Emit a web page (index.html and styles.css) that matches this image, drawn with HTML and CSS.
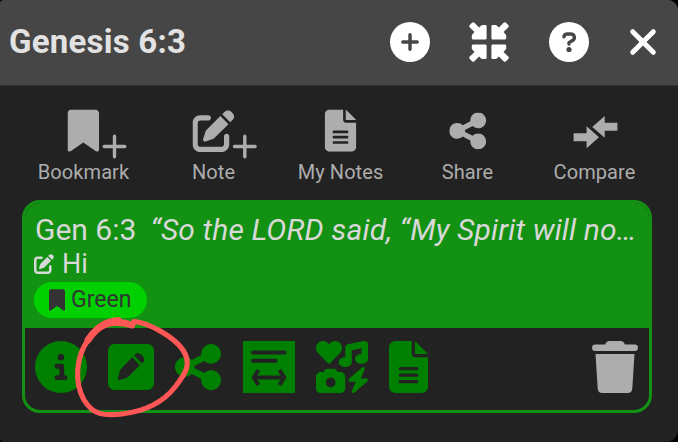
FILE: index.html
```html
<!DOCTYPE html>
<html lang="en">
<head>
<meta charset="utf-8">
<title>Genesis 6:3</title>
<link rel="stylesheet" href="styles.css">
</head>
<body>
<svg class="defs" aria-hidden="true">
  <symbol id="bookmark" viewBox="0 0 384 512"><path d="M0 48V487.7C0 501.1 10.9 512 24.3 512c5 0 9.9-1.5 14-4.4L192 400 345.7 507.6c4.1 2.9 9 4.4 14 4.4c13.4 0 24.3-10.9 24.3-24.3V48c0-26.5-21.5-48-48-48H48C21.5 0 0 21.5 0 48z"/></symbol>
  <symbol id="edit" viewBox="0 0 512 512"><path d="M471.6 21.7c-21.9-21.9-57.3-21.9-79.2 0L362.3 51.7l97.9 97.9 30.1-30.1c21.9-21.9 21.9-57.3 0-79.2L471.6 21.7zm-299.2 220c-6.1 6.1-10.8 13.6-13.5 21.9l-29.6 88.8c-2.9 8.6-.6 18.1 5.8 24.6s15.9 8.7 24.6 5.8l88.8-29.6c8.2-2.7 15.7-7.4 21.9-13.5L437.7 172.3 339.7 74.3 172.4 241.7zM96 64C43 64 0 107 0 160V416c0 53 43 96 96 96H352c53 0 96-43 96-96V320c0-17.7-14.3-32-32-32s-32 14.3-32 32v96c0 17.7-14.3 32-32 32H96c-17.7 0-32-14.3-32-32V160c0-17.7 14.3-32 32-32h96c17.7 0 32-14.3 32-32s-14.3-32-32-32H96z"/></symbol>
  <symbol id="file" viewBox="0 0 384 512"><path d="M64 0C28.7 0 0 28.7 0 64V448c0 35.3 28.7 64 64 64H320c35.3 0 64-28.7 64-64V160H256c-17.7 0-32-14.3-32-32V0H64zM256 0V128H384L256 0zM112 256H272c8.8 0 16 7.2 16 16s-7.2 16-16 16H112c-8.8 0-16-7.2-16-16s7.2-16 16-16zm0 64H272c8.8 0 16 7.2 16 16s-7.2 16-16 16H112c-8.8 0-16-7.2-16-16s7.2-16 16-16zm0 64H272c8.8 0 16 7.2 16 16s-7.2 16-16 16H112c-8.8 0-16-7.2-16-16s7.2-16 16-16z"/></symbol>
  <symbol id="share" viewBox="0 32 448 448"><path d="M352 224c53 0 96-43 96-96s-43-96-96-96s-96 43-96 96c0 4 .2 8 .7 11.9l-94.1 47C145.4 170.2 121.9 160 96 160c-53 0-96 43-96 96s43 96 96 96c25.9 0 49.4-10.2 66.6-26.9l94.1 47c-.5 3.9-.7 7.8-.7 11.9c0 53 43 96 96 96s96-43 96-96s-43-96-96-96c-25.9 0-49.4 10.2-66.6 26.9l-94.1-47c.5-3.9 .7-7.8 .7-11.9s-.2-8-.7-11.9l94.1-47C302.6 213.8 326.1 224 352 224z"/></symbol>
  <symbol id="media" viewBox="0 0 512 512"><path d="M500.3 7.3C507.7 13.3 512 22.4 512 32V176c0 26.5-28.7 48-64 48s-64-21.5-64-48s28.7-48 64-48V71L352 90.2V208c0 26.5-28.7 48-64 48s-64-21.5-64-48s28.7-48 64-48V64c0-15.3 10.8-28.4 25.7-31.4l160-32c9.4-1.9 19.1 .6 26.6 6.600zM74.7 304l11.8-17.8c5.9-8.9 15.9-14.2 26.6-14.2h61.7c10.7 0 20.7 5.3 26.6 14.2L213.300 304H240c26.5 0 48 21.5 48 48V464c0 26.5-21.5 48-48 48H48c-26.5 0-48-21.5-48-48V352c0-26.5 21.5-48 48-48H74.7zM192 408a48 48 0 1 0 -96 0 48 48 0 1 0 96 0zM478.7 278.3L440.3 368H496c6.7 0 12.6 4.1 15 10.4s.6 13.3-4.4 17.7l-128 112c-5.6 4.9-13.9 5.3-19.9 .9s-8.2-12.4-5.3-19.2L391.7 400H336c-6.7 0-12.6-4.1-15-10.4s-.6-13.3 4.4-17.7l128-112c5.6-4.9 13.9-5.3 19.9-.9s8.2 12.4 5.3 19.2zm-339-59.2c-6.5 6.5-17 6.5-23 0L19.9 119.2c-28-29-26.5-76.9 5-103.9c27-23.5 68.4-19 93.4 6.5l10 10.5 9.500-10.5c25-25.5 65.9-30 93.9-6.500c31 27 32.5 74.9 4.5 103.9l-96.4 99.900z"/></symbol>
  <symbol id="arrow-in" viewBox="0 0 18 18"><path d="M.8 5.400Q-.4 4.200.8 3L3 .8Q4.200-.4 5.400.8L10.100 5.500 12.200 3.500Q13.200 2.700 14.500 3H16.400Q17.600 3 17.600 4.200V16.300Q17.600 17.600 16.300 17.600H4.200Q2.800 17.600 2.800 16.300V14.500Q2.600 13.300 3.500 12.300L5.500 10.100Z"/></symbol>
</svg>

<main class="modal">
  <header class="header">
    <h1 class="title">Genesis 6:3</h1>
    <div class="header-actions">
      <svg width="40" height="40" viewBox="0 0 40 40"><circle cx="20" cy="20" r="20"/><path class="hdr-cut" d="M20 12.8V27.2M12.8 20H27.2"/></svg>
      <svg width="40" height="40" viewBox="0 0 40 40"><use href="#arrow-in" width="18" height="18"/><use href="#arrow-in" width="18" height="18" transform="translate(40 0) scale(-1 1)"/><use href="#arrow-in" width="18" height="18" transform="translate(0 40) scale(1 -1)"/><use href="#arrow-in" width="18" height="18" transform="translate(40 40) scale(-1 -1)"/></svg>
      <svg width="40" height="40" viewBox="0 0 40 40"><circle cx="20" cy="20" r="20"/><path class="hdr-cut" d="M14.900 14.800Q15.500 12 18.400 12H21.400C26 12 26.500 16.800 23.500 18.500L20 20.600V22"/><circle class="hdr-dot" cx="20" cy="27.5" r="2.6"/></svg>
      <svg class="close" width="26" height="26" viewBox="0 0 26 26"><path d="M2.700 2.700 23.300 23.300M23.300 2.700 2.700 23.300"/></svg>
    </div>
  </header>

  <nav class="toolbar">
    <div class="tool"><svg width="80" height="54"><use href="#bookmark" x="23.5" y="4.5" width="31.6" height="42.2"/><path class="plus" d="M70.500 31.200V51.800M60.200 41.500H80.800"/></svg><span>Bookmark</span></div>
    <div class="tool"><svg width="80" height="54"><use href="#edit" x="18.500" y="5" width="42" height="42"/><path class="plus" d="M70.800 31.200V51.800M60.500 41.500H81.100"/></svg><span>Note</span></div>
    <div class="tool"><svg width="80" height="54"><use href="#file" x="23.700" y="4.500" width="31.600" height="42.200"/></svg><span>My Notes</span></div>
    <div class="tool"><svg width="80" height="54"><use href="#share" x="21.300" y="7.500" width="36.800" height="36.800"/></svg><span>Share</span></div>
    <div class="tool"><svg width="80" height="54"><path d="M18.600 28.300H31.600V21.300L44 32.300L31.600 43.300V36.300H18.600ZM62.400 17.800H49.700V11L37.300 22L49.700 32.800V25.800H62.400Z"/></svg><span>Compare</span></div>
  </nav>

  <section class="card">
    <div class="card-top">
      <div class="verse"><span class="ref">Gen 6:3</span><em class="quote">“So the LORD said, “My Spirit will no…</em></div>
      <div class="note"><svg width="20" height="20"><use href="#edit" width="20" height="20"/></svg><span>Hi</span></div>
      <div class="label"><svg width="16" height="22"><use href="#bookmark" width="16" height="22"/></svg><span>Green</span></div>
    </div>
    <div class="card-actions">
      <svg width="52" height="52" viewBox="0 0 512 512"><circle cx="256" cy="256" r="256"/><path class="cut" d="M216 336h24V272H216c-13.300 0-24-10.700-24-24s10.700-24 24-24h48c13.300 0 24 10.700 24 24v88h8c13.300 0 24 10.700 24 24s-10.700 24-24 24H216c-13.300 0-24-10.700-24-24s10.700-24 24-24zm40-208a32 32 0 1 1 0 64 32 32 0 1 1 0-64z"/></svg>
      <svg width="46" height="46" viewBox="0 0 46 46"><rect width="46" height="46" rx="6.500"/><path class="cut" d="M26.200 11.400 28.700 9Q31.500 8.600 34.300 11.500T36.400 17.300L34 19.600ZM24.300 13.300 31.800 21.200 20.500 32.600 Q19.500 33.600 17.500 34.200L11.300 36Q9.500 36.300 10 34.400L11.600 28Q12 25.700 13.300 24.400Z"/></svg>
      <svg width="46" height="46"><use href="#share" width="46" height="46"/></svg>
      <svg width="52" height="52" viewBox="0 0 52 52"><path d="M0 0H52V52H0Z"/><path class="lines" d="M10 11.500H41.500M10 19.800H32.500"/><path class="span" d="M11 36.500H41M15.500 29 10.800 36.500 15.500 44M36.500 29 41.200 36.500 36.500 44"/></svg>
      <svg width="52" height="52"><use href="#media" width="52" height="52"/></svg>
      <svg width="39" height="52"><use href="#file" width="39" height="52"/></svg>
      <svg class="trash" width="46" height="52" viewBox="0 0 46 52"><path d="M3.300 3.500H13.200Q14 0 17.500 0H28.500Q32 0 32.800 3.500H42.700A3.250 3.250 0 0 1 42.700 10H3.300A3.250 3.250 0 0 1 3.300 3.500ZM3.500 13H42.500L40.300 47.500Q39.900 52 35.500 52H10.500Q6.100 52 5.700 47.500Z"/></svg>
    </div>
  </section>

  <svg class="annotation" width="130" height="110" viewBox="70 312 130 110"><path d="M134 321.500C150 323 174 337 183 350C192 364 186 373 175 387C161 405 139 412 122 414C104 416 93 415 84 400C74 382 76 357 88 340C97 326 106 320 119 319.500"/><path class="thick" d="M88 340C98 325 110 318 132 325"/></svg>
</main>
</body>
</html>
```

FILE: styles.css
```css
* { box-sizing: border-box; }

body {
  margin: 0;
  background: #000;
  font-family: Roboto, "Liberation Sans", sans-serif;
}

svg { display: block; flex: none; fill: currentColor; overflow: visible; }
.defs { position: absolute; width: 0; height: 0; }

.modal {
  position: relative;
  width: 678px;
  height: 442px;
  overflow: hidden;
  background: #222;
  border-radius: 4px 10px 12px 4px;
}

.header {
  display: flex;
  align-items: center;
  justify-content: space-between;
  height: 86px;
  padding: 0 22px 2px 9px;
  background: #464646;
  border-bottom: 1px solid #333;
}
.title { margin: 0; font-size: 33px; line-height: 40px; font-weight: 700; letter-spacing: 0.22px; color: #e2e2e2; }
.header-actions { display: flex; align-items: center; gap: 39.5px; color: #fff; }
.hdr-cut { fill: none; stroke: #464646; stroke-width: 3.4; stroke-linecap: round; stroke-linejoin: round; }
.hdr-dot { fill: #464646; }
.close { margin-left: 2px; }
.close path { fill: none; stroke: currentColor; stroke-width: 5; stroke-linecap: round; }

.toolbar {
  display: grid;
  grid-template-columns: 129px 131px 123px 131px 123px;
  height: 114px;
  padding: 19px 0 0 19px;
  color: #adadad;
}
.tool { display: flex; flex-direction: column; align-items: center; font-size: 20px; line-height: 27px; letter-spacing: 0.08px; }
.plus { fill: none; stroke: currentColor; stroke-width: 3.4; stroke-linecap: round; }

.card {
  width: 630px;
  height: 213px;
  margin-left: 22px;
  overflow: hidden;
  background: #222;
  border: 3px solid #129112;
  border-radius: 18px;
}
.card-top { height: 125px; padding: 8px 12px 0 9px; background: #129112; color: #d8d8d8; }
.verse { display: flex; align-items: baseline; height: 38px; padding-left: 1px; font-size: 30px; line-height: 38px; white-space: nowrap; }
.ref { margin-right: 14px; }
.quote { letter-spacing: 0.14px; }
.note { display: flex; align-items: center; gap: 8px; height: 30px; font-size: 27px; line-height: 30px; }
.label {
  display: flex;
  align-items: center;
  gap: 6px;
  width: 113px;
  height: 36px;
  margin-top: 3px;
  padding: 0 0 1px 15px;
  border-radius: 18px;
  background: #00d000;
  color: #333;
  font-size: 23px;
}
.card-actions { display: flex; align-items: center; gap: 21.2px; height: 78px; padding: 0 11px 0 10px; color: #008000; }
.cut { fill: #222; }
.lines, .span { fill: none; stroke: #222; stroke-width: 4; stroke-linecap: round; }
.span { stroke-linecap: butt; }
.trash { margin-left: auto; color: #adadad; }

.annotation { position: absolute; left: 70px; top: 312px; }
.annotation path { fill: none; stroke: #ff5656; stroke-width: 5.2; stroke-linecap: round; }
.annotation .thick { stroke-width: 7; }
```
